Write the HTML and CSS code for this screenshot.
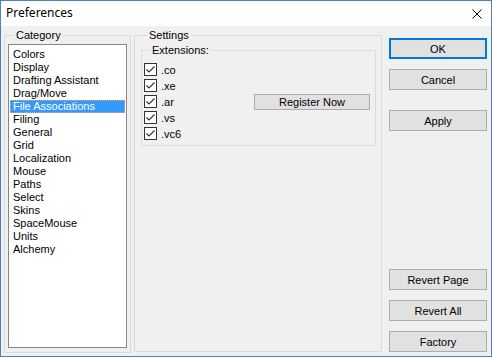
FILE: index.html
```html
<!DOCTYPE html>
<html lang="en">
<head>
    <meta charset="UTF-8">
    <title>Preferences</title>
    <link rel="stylesheet" href="styles.css">
</head>
<body>
    <div class="window">
        <div class="title-bar">
            <span class="title">Preferences</span>
            <button class="close-btn" aria-label="Close">
                <svg width="10" height="10" viewBox="0 0 10 10"><path d="M0.5 0.5 L9.5 9.5 M9.5 0.5 L0.5 9.5" stroke="#000" stroke-width="1" fill="none"/></svg>
            </button>
        </div>

        <div class="dialog-body">
            <!-- Lista de categorias -->
            <fieldset class="group category-group">
                <legend>Category</legend>
                <ul class="category-list">
                    <li>Colors</li>
                    <li>Display</li>
                    <li>Drafting Assistant</li>
                    <li>Drag/Move</li>
                    <li class="selected">File Associations</li>
                    <li>Filing</li>
                    <li>General</li>
                    <li>Grid</li>
                    <li>Localization</li>
                    <li>Mouse</li>
                    <li>Paths</li>
                    <li>Select</li>
                    <li>Skins</li>
                    <li>SpaceMouse</li>
                    <li>Units</li>
                    <li>Alchemy</li>
                </ul>
            </fieldset>

            <!-- Panel de ajustes -->
            <fieldset class="group settings-group">
                <legend>Settings</legend>
                <fieldset class="group ext-group">
                    <legend>Extensions:</legend>
                    <div class="ext-row">
                        <div class="check-list">
                            <label class="check"><span class="box"><svg width="11" height="11" viewBox="0 0 11 11"><path d="M1.5 5.5 L4 8 L9.5 2.5" stroke="#333" stroke-width="1.2" fill="none"/></svg></span>.co</label>
                            <label class="check"><span class="box"><svg width="11" height="11" viewBox="0 0 11 11"><path d="M1.5 5.5 L4 8 L9.5 2.5" stroke="#333" stroke-width="1.2" fill="none"/></svg></span>.xe</label>
                            <label class="check"><span class="box"><svg width="11" height="11" viewBox="0 0 11 11"><path d="M1.5 5.5 L4 8 L9.5 2.5" stroke="#333" stroke-width="1.2" fill="none"/></svg></span>.ar</label>
                            <label class="check"><span class="box"><svg width="11" height="11" viewBox="0 0 11 11"><path d="M1.5 5.5 L4 8 L9.5 2.5" stroke="#333" stroke-width="1.2" fill="none"/></svg></span>.vs</label>
                            <label class="check"><span class="box"><svg width="11" height="11" viewBox="0 0 11 11"><path d="M1.5 5.5 L4 8 L9.5 2.5" stroke="#333" stroke-width="1.2" fill="none"/></svg></span>.vc6</label>
                        </div>
                        <button class="btn register-btn">Register Now</button>
                    </div>
                </fieldset>
            </fieldset>

            <!-- Botones -->
            <div class="button-col">
                <button class="btn default-btn">OK</button>
                <button class="btn cancel-btn">Cancel</button>
                <button class="btn apply-btn">Apply</button>
                <button class="btn revert-page-btn">Revert Page</button>
                <button class="btn">Revert All</button>
                <button class="btn">Factory</button>
            </div>
        </div>
    </div>
</body>
</html>
```

FILE: styles.css
```css
* { box-sizing: border-box; }
body { margin: 0; background: #fff; font-family: "Liberation Sans", Arial, sans-serif; font-size: 11px; color: #000; }

.window {
    width: 492px; height: 357px;
    border: 1px solid #4f80c4;
    background: #f0f0f0;
    display: flex; flex-direction: column;
    overflow: hidden;
}
.title-bar {
    height: 25px; background: #fff;
    display: flex; align-items: center; justify-content: space-between;
    padding: 0 9px 0 5px;
}
.title { font-family: "Noto Sans", "Open Sans", sans-serif; font-size: 12px; line-height: 14px; padding-bottom: 1px; }
.close-btn { border: none; background: none; padding: 0; width: 10px; height: 10px; display: block; margin-top: 1px; }
.close-btn svg { display: block; }

.dialog-body {
    flex: 1;
    display: flex;
    padding: 3px 4px 3px 3px;
}

/* Group boxes */
.group {
    margin: 0; padding: 0;
    border: 1px solid #dcdcdc;
    min-width: 0;
}
.group legend {
    margin-left: 6px; padding: 0 2px;
    line-height: 13px; font-size: 11px;
}
.category-group { width: 127px; padding: 2px 3px 4px 3px; }
.settings-group { width: 248px; margin-left: 3px; padding: 2px 5px 0 6px; margin-bottom: 1px; }

.category-list {
    list-style: none; margin: 0; padding: 3px 1px 2px;
    height: 304px;
    background: #fff;
    border: 1px solid #828790;
}
.category-list li { height: 13px; line-height: 13px; padding-left: 3px; white-space: nowrap; }
.category-list li.selected {
    background: #3399ff; color: #fff;
    outline: 1px dotted #f7a35c; outline-offset: -1px;
}

.ext-group { padding: 6px 5px 5px 2px; }
.ext-row { display: flex; align-items: center; }
.check-list { display: flex; flex-direction: column; gap: 3px; }
.check { display: flex; align-items: center; height: 13px; gap: 4px; }
.box {
    width: 13px; height: 13px;
    border: 1px solid #333; background: #fff;
    display: flex; align-items: center; justify-content: center;
}
.box svg { display: block; }

.btn {
    font-family: "Liberation Sans", Arial, sans-serif; font-size: 11px;
    background: #e1e1e1; border: 1px solid #adadad; color: #000;
    padding: 0; height: 21px;
}
.register-btn { width: 116px; height: 16px; margin-left: auto; line-height: 14px; }

.button-col {
    display: flex; flex-direction: column;
    width: 98px; margin-left: 7px;
    padding-top: 9px; padding-bottom: 1px;
}
.button-col .btn { width: 98px; }
.default-btn { border: 2px solid #0078d7; }
.cancel-btn { margin-top: 10px; }
.apply-btn { margin-top: 20px; }
.revert-page-btn { margin-top: auto; }
.button-col .btn + .btn:not(.cancel-btn):not(.apply-btn):not(.revert-page-btn) { margin-top: 10px; }
```
